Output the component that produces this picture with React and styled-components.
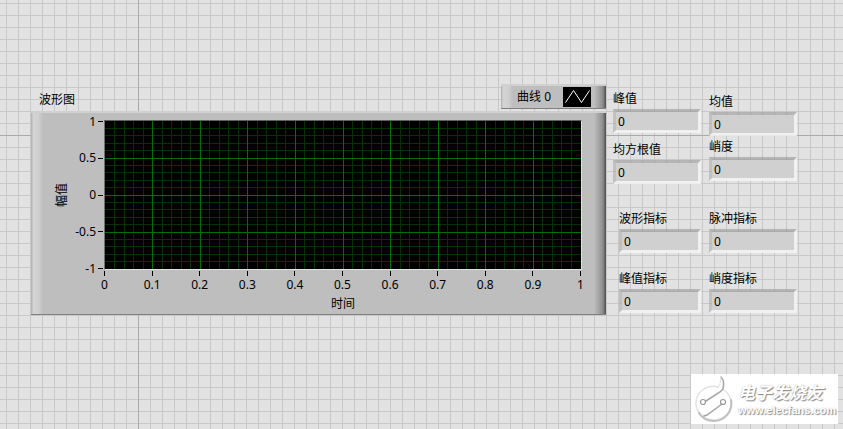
import styled, { createGlobalStyle } from "styled-components";

const yTicks = ["1", "0.5", "0", "-0.5", "-1"];
const xTicks = ["0", "0.1", "0.2", "0.3", "0.4", "0.5", "0.6", "0.7", "0.8", "0.9", "1"];

const columns = [
    {
        top: 4,
        groups: [
            { gap: 6, indent: 0, items: ["峰值", "均方根值"] },
            { gap: 15, indent: 6, items: ["波形指标", "峰值指标"] },
        ],
        groupGap: 24,
    },
    {
        top: 7,
        groups: [
            { gap: 0, indent: 0, items: ["均值", "峭度"] },
            { gap: 15, indent: 0, items: ["脉冲指标", "峭度指标"] },
        ],
        groupGap: 27,
    },
];

// n divisions, every 5th line is a major one
const gridLines = (n) => {
    const lines = Array.from({ length: n - 1 }, (_, i) => i + 1).map((i) => ({
        at: `${(i * 100) / n}%`,
        major: i % 5 === 0,
    }));
    return lines.sort((a, b) => a.major - b.major);
};

const PlotGrid = () => (
    <PlotSvg aria-hidden="true">
        {gridLines(20).map(({ at, major }) => (
            <GridLine key={at} $major={major} x1="0" x2="100%" y1={at} y2={at}/>
        ))}
        {gridLines(50).map(({ at, major }) => (
            <GridLine key={at} $major={major} x1={at} x2={at} y1="0" y2="100%"/>
        ))}
        {gridLines(20).filter((line) => line.major).map(({ at }) => (
            <GridLine key={at} $major x1="0" x2="100%" y1={at} y2={at}/>
        ))}
    </PlotSvg>
);

const WaveformGraph = () => (
    <Graph>
        <GraphHeader>
            <GraphTitle>波形图</GraphTitle>
            <Legend>
                曲线 0
                <svg width="28" height="20" viewBox="0 0 28 20" aria-hidden="true">
                    <rect width="28" height="20" fill="#000"/>
                    <path d="M2.5 15.5L10.5 3.5L18.5 15.5L26.5 3.5" fill="none" stroke="#fff"/>
                </svg>
            </Legend>
        </GraphHeader>
        <GraphPanel>
            <YName>幅值</YName>
            <YAxis>
                {yTicks.map((tick) => <YTick key={tick}>{tick}</YTick>)}
            </YAxis>
            <Plot><PlotGrid/></Plot>
            <XAxis>
                {xTicks.map((tick) => <XTick key={tick}>{tick}</XTick>)}
            </XAxis>
            <XName>时间</XName>
        </GraphPanel>
    </Graph>
);

const Indicator = ({ name }) => (
    <Field>
        <FieldLabel htmlFor={name}>{name}</FieldLabel>
        <FieldBox id={name} type="text" value="0" readOnly/>
    </Field>
);

const Watermark = () => (
    <Mark>
        <MarkLogo viewBox="0 0 38 48" aria-hidden="true">
            <g fill="none" strokeLinecap="round">
                <path d="M23 12C12 9 1 17 1 28C1 37 9 45 18 45C29 45 37 37 36 27C36 22 33 18 29 15" stroke="#e2e2e2" strokeWidth="1.5"/>
                <path d="M36 25C38 36 30 46 19 46C12 46 7 43 4 38" stroke="#c0c0c0" strokeWidth="2"/>
                <path d="M26 2C29 5 29 10 28 14L25 17L11 26M9 41L12 40L27 29" stroke="#a4a4a4" strokeWidth="1.5"/>
                <path d="M26 2C25 6 26 9 23 12" stroke="#e0e0e0"/>
                <circle cx="8" cy="27" r="2.5" stroke="#999" strokeWidth="1.2"/>
                <circle cx="28" cy="27" r="2.5" stroke="#999" strokeWidth="1.2"/>
            </g>
        </MarkLogo>
        <MarkText>
            <MarkName>电子发烧友</MarkName>
            <MarkSite>www.elecfans.com</MarkSite>
        </MarkText>
    </Mark>
);

const App = () => (
    <>
        <GlobalStyle/>
        <FrontPanel>
            <WaveformGraph/>
            <Indicators>
                {columns.map((column) => (
                    <Column key={column.top} $top={column.top} $gap={column.groupGap}>
                        {column.groups.map((group) => (
                            <Group key={group.items[0]} $gap={group.gap} $indent={group.indent}>
                                {group.items.map((name) => <Indicator key={name} name={name}/>)}
                            </Group>
                        ))}
                    </Column>
                ))}
            </Indicators>
            <Watermark/>
        </FrontPanel>
    </>
);

const GlobalStyle = createGlobalStyle`
    * {
        box-sizing: border-box;
    }
    body {
        margin: 0;
        font: 12px/20px "Noto Sans", "Noto Sans CJK SC", sans-serif;
        color: #000;
    }
`;
const FrontPanel = styled.main`
    position: relative;
    display: flex;
    align-items: flex-start;
    gap: 7px;
    min-height: 100vh;
    padding: 84px 46px 84px 31px;
    background:
        linear-gradient(#aaa, #aaa) 138px 0 / 1px 100% no-repeat,
        linear-gradient(#aaa, #aaa) 0 135px / 100% 1px no-repeat,
        linear-gradient(90deg, #c8c8c8 1px, transparent 1px) 6px 0 / 12px 12px,
        linear-gradient(#c8c8c8 1px, transparent 1px) 0 3px / 12px 12px,
        #e2e2e2;
`;
const Graph = styled.section`
    flex: 1;
    min-width: 0;
`;
const GraphHeader = styled.div`
    display: flex;
    justify-content: space-between;
    align-items: flex-end;
    padding-left: 8px;
    margin-bottom: 2px;
`;
const GraphTitle = styled.h2`
    margin: 0;
    font-size: 12px;
    font-weight: normal;
    line-height: 18px;
`;
const Bevel = styled.div`
    border-bottom: 1px solid #808080;
    border-top: 2px solid #d0d0d0;
    background:
        linear-gradient(90deg, transparent, #909090 70%, #686868 90%, #484848) right / 12px 100% no-repeat,
        linear-gradient(90deg, #b8b8b8 1px, #d4d4d4 2px, #d0d0d0 60%, #bebebe) left / 12px 100% no-repeat,
        #bebebe;
`;
const Legend = styled(Bevel)`
    display: flex;
    align-items: center;
    gap: 12px;
    height: 25px;
    padding: 0 15px 0 16px;
`;
const GraphPanel = styled(Bevel)`
    display: grid;
    grid-template-columns: 16px 34px 1fr;
    grid-template-rows: 150px 23px 21px;
    padding: 7px 24px 0 23px;
`;
const YName = styled.div`
    writing-mode: vertical-rl;
    text-orientation: sideways;
    transform: rotate(180deg);
    text-align: center;
    line-height: 16px;
`;
const YAxis = styled.div`
    display: flex;
    flex-direction: column;
    justify-content: space-between;
    margin: 1px 0;
    padding-right: 1px;
`;
const YTick = styled.div`
    display: flex;
    justify-content: flex-end;
    align-items: center;
    gap: 2px;
    height: 1px;
    white-space: nowrap;
    &:after{
        content: "";
        flex: none;
        width: 5px;
        height: 1px;
        background: #000;
    }
`;
const Plot = styled.div`
    border: 1px solid #e0e0e0;
    border-top-color: #606060;
    border-left-color: #707070;
    background: #000;
`;
const PlotSvg = styled.svg`
    display: block;
    width: 100%;
    height: 148px;
`;
const GridLine = styled.line`
    stroke: ${({ $major }) => ($major ? "#007000" : "#003300")};
    shape-rendering: crispEdges;
`;
const XAxis = styled.div`
    grid-column: 3;
    display: flex;
    justify-content: space-between;
    margin: 1px 1px 0 0;
`;
const XTick = styled.div`
    display: flex;
    flex-direction: column;
    align-items: center;
    width: 1px;
    white-space: nowrap;
    line-height: 18px;
    &:before{
        content: "";
        flex: none;
        width: 1px;
        height: 5px;
        background: #000;
    }
`;
const XName = styled.div`
    grid-column: 3;
    text-align: center;
    line-height: 22px;
`;
const Indicators = styled.section`
    display: flex;
    gap: 8px;
`;
const Column = styled.div`
    display: flex;
    flex-direction: column;
    gap: ${({ $gap }) => $gap}px;
    width: 88px;
    padding-top: ${({ $top }) => $top}px;
`;
const Group = styled.div`
    display: flex;
    flex-direction: column;
    gap: ${({ $gap }) => $gap}px;
    padding-left: ${({ $indent }) => $indent}px;
`;
const Field = styled.div`
    display: flex;
    flex-direction: column;
    padding-top: 1px;
`;
const FieldLabel = styled.label`
    white-space: nowrap;
`;
const FieldBox = styled.input`
    width: 100%;
    height: 24px;
    padding: 0 2px;
    border: 3px solid;
    border-color: rgba(150, 150, 150, 0.6) rgba(244, 244, 244, 0.85) rgba(244, 244, 244, 0.85) rgba(170, 170, 170, 0.6);
    border-radius: 0;
    outline: none;
    background: #d0d0d0;
    background-clip: padding-box;
    font: inherit;
    color: inherit;
`;
const Mark = styled.aside`
    position: absolute;
    right: 5px;
    bottom: 5px;
    display: flex;
    align-items: center;
    gap: 5px;
    width: 147px;
    height: 50px;
    padding-left: 4px;
    background: #fff;
`;
const MarkLogo = styled.svg`
    flex: none;
    width: 38px;
    height: 48px;
`;
const MarkText = styled.div`
    display: flex;
    flex-direction: column;
    color: #fff;
    text-shadow: 1px 1px 1px #888, 0 0 1px #aaa;
    white-space: nowrap;
`;
const MarkName = styled.span`
    font: italic bold 17px/22px "Noto Sans CJK SC", sans-serif;
`;
const MarkSite = styled.span`
    font: bold 11px/14px "Liberation Sans", sans-serif;
`;

export default App;
